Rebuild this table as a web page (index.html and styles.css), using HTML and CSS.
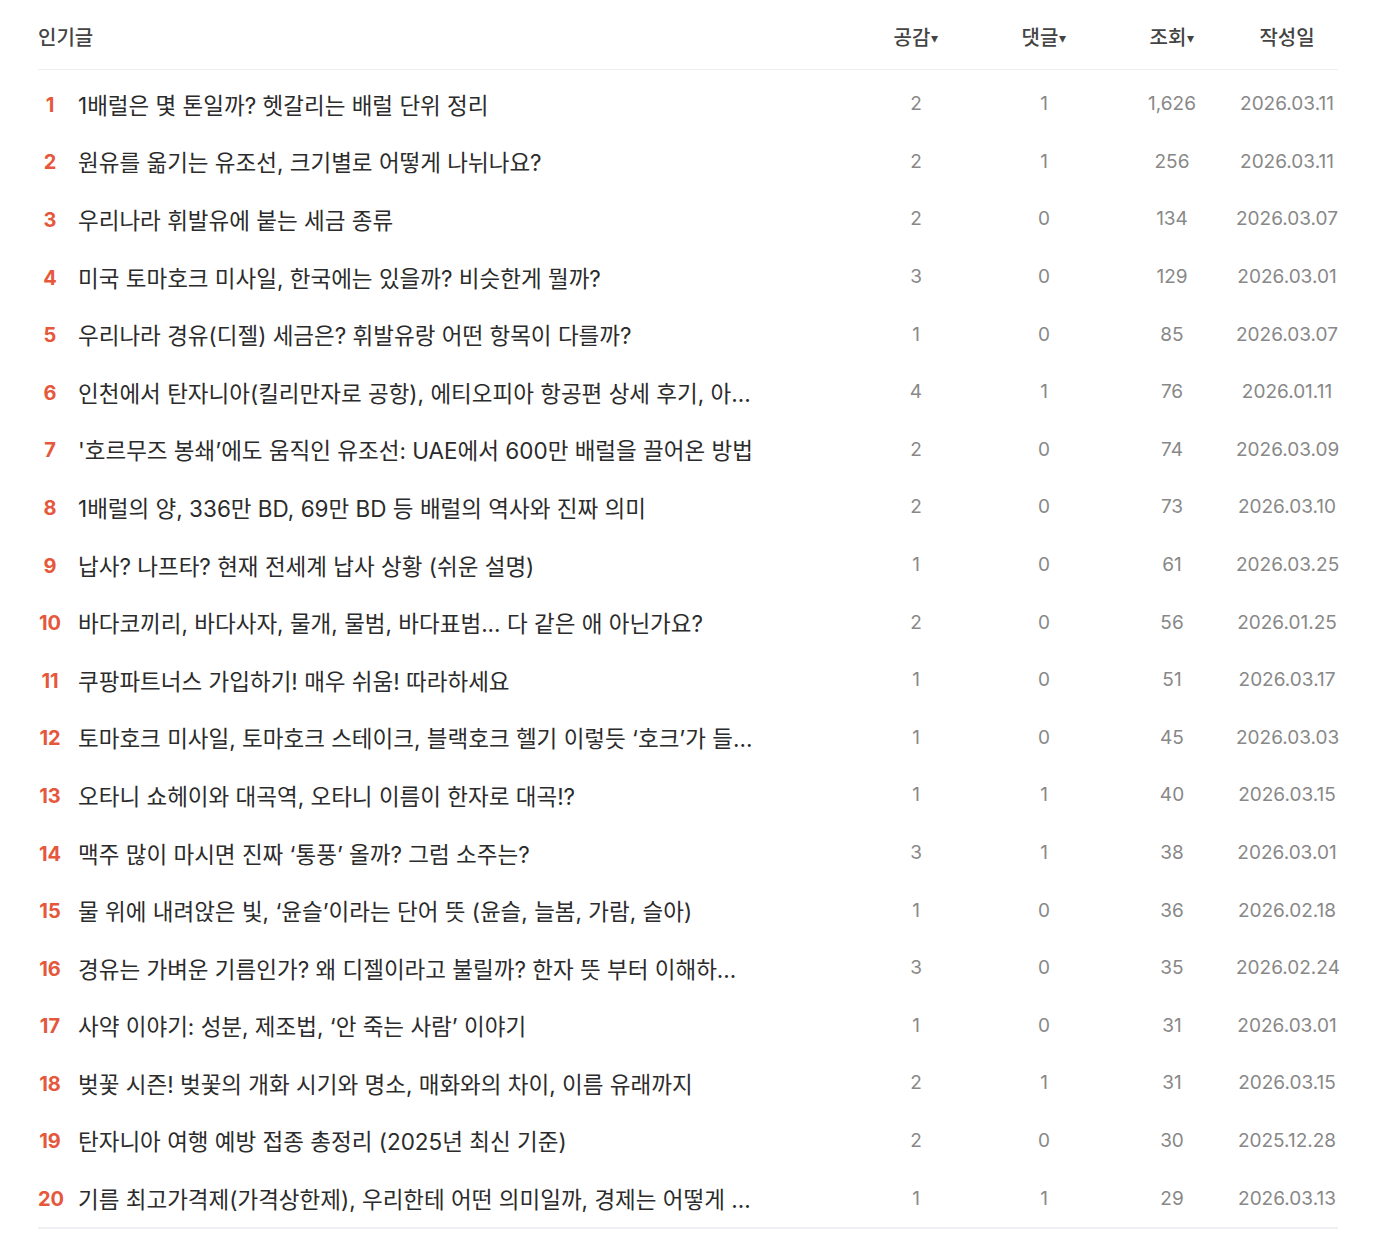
FILE: index.html
```html
<!DOCTYPE html>
<html lang="ko">
<head>
<meta charset="utf-8">
<title>인기글</title>
<link rel="stylesheet" href="styles.css">
</head>
<body>
<div class="board">
  <div class="head">
    <div class="h-title">인기글</div>
    <div class="h-col">공감<span class="caret">▾</span></div>
    <div class="h-col">댓글<span class="caret">▾</span></div>
    <div class="h-col">조회<span class="caret">▾</span></div>
    <div class="h-col">작성일</div>
  </div>
  <ol class="list">
    <li class="row"><span class="rank">1</span><span class="title">1배럴은 몇 톤일까? 헷갈리는 배럴 단위 정리</span><span class="num">2</span><span class="num">1</span><span class="num">1,626</span><span class="num">2026.03.11</span></li>
    <li class="row"><span class="rank">2</span><span class="title">원유를 옮기는 유조선, 크기별로 어떻게 나뉘나요?</span><span class="num">2</span><span class="num">1</span><span class="num">256</span><span class="num">2026.03.11</span></li>
    <li class="row"><span class="rank">3</span><span class="title">우리나라 휘발유에 붙는 세금 종류</span><span class="num">2</span><span class="num">0</span><span class="num">134</span><span class="num">2026.03.07</span></li>
    <li class="row"><span class="rank">4</span><span class="title">미국 토마호크 미사일, 한국에는 있을까? 비슷한게 뭘까?</span><span class="num">3</span><span class="num">0</span><span class="num">129</span><span class="num">2026.03.01</span></li>
    <li class="row"><span class="rank">5</span><span class="title">우리나라 경유(디젤) 세금은? 휘발유랑 어떤 항목이 다를까?</span><span class="num">1</span><span class="num">0</span><span class="num">85</span><span class="num">2026.03.07</span></li>
    <li class="row"><span class="rank">6</span><span class="title">인천에서 탄자니아(킬리만자로 공항), 에티오피아 항공편 상세 후기, 아...</span><span class="num">4</span><span class="num">1</span><span class="num">76</span><span class="num">2026.01.11</span></li>
    <li class="row"><span class="rank">7</span><span class="title">'호르무즈 봉쇄’에도 움직인 유조선: UAE에서 600만 배럴을 끌어온 방법</span><span class="num">2</span><span class="num">0</span><span class="num">74</span><span class="num">2026.03.09</span></li>
    <li class="row"><span class="rank">8</span><span class="title">1배럴의 양, 336만 BD, 69만 BD 등 배럴의 역사와 진짜 의미</span><span class="num">2</span><span class="num">0</span><span class="num">73</span><span class="num">2026.03.10</span></li>
    <li class="row"><span class="rank">9</span><span class="title">납사? 나프타? 현재 전세계 납사 상황 (쉬운 설명)</span><span class="num">1</span><span class="num">0</span><span class="num">61</span><span class="num">2026.03.25</span></li>
    <li class="row"><span class="rank">10</span><span class="title">바다코끼리, 바다사자, 물개, 물범, 바다표범... 다 같은 애 아닌가요?</span><span class="num">2</span><span class="num">0</span><span class="num">56</span><span class="num">2026.01.25</span></li>
    <li class="row"><span class="rank">11</span><span class="title">쿠팡파트너스 가입하기! 매우 쉬움! 따라하세요</span><span class="num">1</span><span class="num">0</span><span class="num">51</span><span class="num">2026.03.17</span></li>
    <li class="row"><span class="rank">12</span><span class="title">토마호크 미사일, 토마호크 스테이크, 블랙호크 헬기 이렇듯 ‘호크’가 들...</span><span class="num">1</span><span class="num">0</span><span class="num">45</span><span class="num">2026.03.03</span></li>
    <li class="row"><span class="rank">13</span><span class="title">오타니 쇼헤이와 대곡역, 오타니 이름이 한자로 대곡!?</span><span class="num">1</span><span class="num">1</span><span class="num">40</span><span class="num">2026.03.15</span></li>
    <li class="row"><span class="rank">14</span><span class="title">맥주 많이 마시면 진짜 ‘통풍’ 올까? 그럼 소주는?</span><span class="num">3</span><span class="num">1</span><span class="num">38</span><span class="num">2026.03.01</span></li>
    <li class="row"><span class="rank">15</span><span class="title">물 위에 내려앉은 빛, ‘윤슬’이라는 단어 뜻 (윤슬, 늘봄, 가람, 슬아)</span><span class="num">1</span><span class="num">0</span><span class="num">36</span><span class="num">2026.02.18</span></li>
    <li class="row"><span class="rank">16</span><span class="title">경유는 가벼운 기름인가? 왜 디젤이라고 불릴까? 한자 뜻 부터 이해하...</span><span class="num">3</span><span class="num">0</span><span class="num">35</span><span class="num">2026.02.24</span></li>
    <li class="row"><span class="rank">17</span><span class="title">사약 이야기: 성분, 제조법, ‘안 죽는 사람’ 이야기</span><span class="num">1</span><span class="num">0</span><span class="num">31</span><span class="num">2026.03.01</span></li>
    <li class="row"><span class="rank">18</span><span class="title">벚꽃 시즌! 벚꽃의 개화 시기와 명소, 매화와의 차이, 이름 유래까지</span><span class="num">2</span><span class="num">1</span><span class="num">31</span><span class="num">2026.03.15</span></li>
    <li class="row"><span class="rank">19</span><span class="title">탄자니아 여행 예방 접종 총정리 (2025년 최신 기준)</span><span class="num">2</span><span class="num">0</span><span class="num">30</span><span class="num">2025.12.28</span></li>
    <li class="row"><span class="rank">20</span><span class="title">기름 최고가격제(가격상한제), 우리한테 어떤 의미일까, 경제는 어떻게 ...</span><span class="num">1</span><span class="num">1</span><span class="num">29</span><span class="num">2026.03.13</span></li>
  </ol>
</div>
</body>
</html>
```

FILE: styles.css
```css
html, body {
  margin: 0;
  padding: 0;
  background: #fff;
}

body {
  font-family: Inter, "Noto Sans CJK KR", sans-serif;
  color: #333;
}

.board {
  width: 1300px;
  margin-left: 38px;
}

.head,
.row {
  display: grid;
  grid-template-columns: 24px 790px 128px 128px 128px 102px;
  align-items: center;
}

.head {
  height: 70px;
  border-bottom: 1px solid #eeeeee;
  font-size: 20px;
  font-weight: 500;
  color: #444;
  box-sizing: border-box;
  padding-top: 4px;
}

.h-title {
  grid-column: 1 / 3;
}

.h-col {
  text-align: center;
}

.caret {
  font-size: 14px;
  margin-left: 1px;
  vertical-align: 2px;
}

.list {
  list-style: none;
  margin: 0;
  padding: 5px 0 0;
  border-bottom: 2px solid #eeeef3;
}

.row {
  height: 57.6px;
}

.rank {
  text-align: center;
  font-size: 20px;
  font-weight: 700;
  color: #e5583c;
  padding-top: 2px;
}

.title {
  padding-left: 16px;
  max-width: 690px;
  font-size: 22.5px;
  color: #2b2b2b;
  white-space: nowrap;
  overflow: hidden;
  text-overflow: ellipsis;
}

.num {
  text-align: center;
  font-size: 19px;
  color: #888;
}
```
